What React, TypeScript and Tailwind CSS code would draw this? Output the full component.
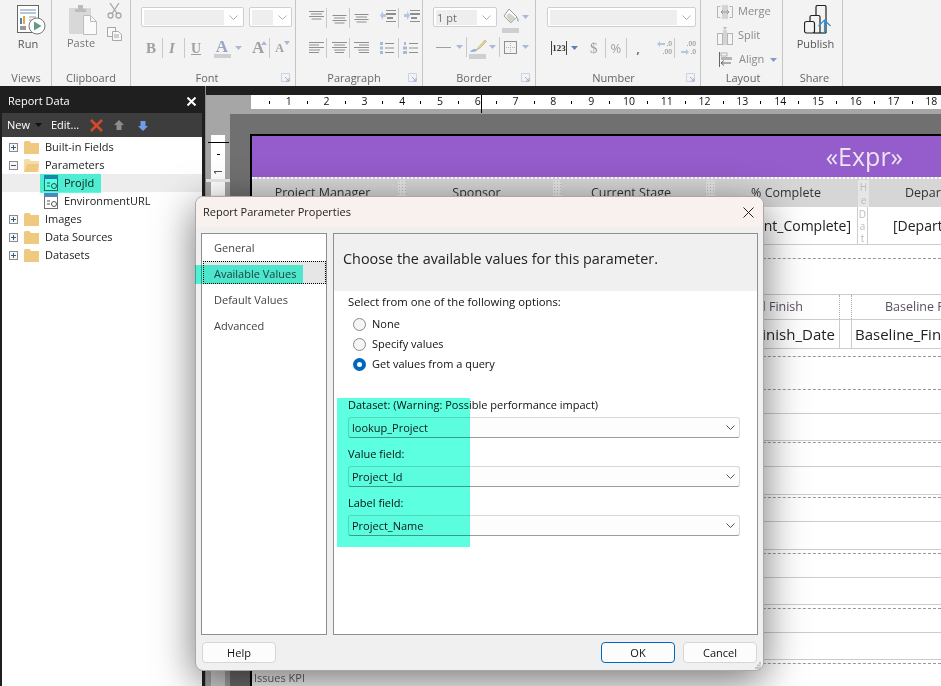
import type { ReactNode } from 'react'

const rulerNumbers = [1, 2, 3, 4, 5, 6, 7, 8, 9, 10, 11, 12, 13, 14, 15, 16, 17, 18]

// horizontal rules under the two tables, top to bottom
const reportLines = [
  'h-[8px] border-b border-dashed border-[#999]',
  'h-[33px] border-b border-dashed border-[#999]',
  'h-[24px] border-b border-[#ccc]',
  'h-[27px] border-b border-[#ccc]',
  'h-[2px] border-b border-dashed border-[#999]',
  'h-[24px] border-b border-[#ccc]',
  'h-[28px] border-b border-[#ccc]',
  'h-[3px] border-b border-dashed border-[#999]',
  'h-[24px] border-b border-[#ccc]',
  'h-[28px] border-b border-[#ccc]',
  'h-[4px] border-b border-dashed border-[#999]',
  'h-[24px] border-b border-[#ccc]',
  'h-[27px] border-b border-[#ccc]',
  'h-[4px] border-b border-dashed border-[#999]',
  'h-[24px] border-b border-[#ccc]',
  'h-[27px] border-b border-[#ccc]',
  'h-[4px] border-b border-dashed border-[#999]',
]

function Caret({ color = '#a9b9d6' }: { color?: string }) {
  return (
    <svg width="7" height="4" viewBox="0 0 7 4" className="shrink-0">
      <path d="M0 0h7L3.500 4z" fill={color} />
    </svg>
  )
}

function Chevron({ color = '#777' }: { color?: string }) {
  return (
    <svg width="9" height="5" viewBox="0 0 9 5" className="shrink-0">
      <path d="M.5.500l4 4 4-4" fill="none" stroke={color} strokeWidth="1" />
    </svg>
  )
}

function Sep() {
  return <div className="h-[20px] w-px shrink-0 bg-[#c9c9c9]" />
}

function RunIcon() {
  return (
    <svg width="30" height="30" viewBox="0 0 30 30">
      <rect x=".5" y=".5" width="21" height="27" fill="#fff" stroke="#666" />
      <path d="M3 5h16M3 8h16" stroke="#6d8fb8" />
      <path d="M12 12h7M12 15h7" stroke="#999" />
      <rect x="3" y="13" width="2" height="6" fill="#4d7fb8" />
      <rect x="6" y="11" width="2" height="8" fill="#e0a93c" />
      <rect x="3" y="21" width="6" height="4" fill="#999" />
      <circle cx="20" cy="21" r="8" fill="#fff" stroke="#777" />
      <path d="M17 16.500l7.500 4.500-7.500 4.500z" fill="#5f9c8a" />
    </svg>
  )
}

function PasteIcon() {
  return (
    <svg width="28" height="30" viewBox="0 0 28 30">
      <rect x="0" y="3" width="22" height="26" rx="1" fill="#d8d8d8" />
      <path d="M6 4h3V0h5v4h3v3H6z" fill="#bcbcbc" />
      <path d="M14.500 10.500h7l6 6v13h-13z" fill="#fafafa" stroke="#bcbcbc" />
      <path d="M21.500 10.500v6h6" fill="none" stroke="#bcbcbc" />
    </svg>
  )
}

function ScissorsIcon() {
  return (
    <svg width="15" height="16" viewBox="0 0 15 16" fill="none" stroke="#a8a8a8" strokeWidth="1.300">
      <path d="M3 0l7 10.500M12 0L5 10.500" />
      <circle cx="3.500" cy="12.500" r="2.500" />
      <circle cx="11.500" cy="12.500" r="2.500" />
    </svg>
  )
}

function CopyIcon() {
  return (
    <svg width="15" height="14" viewBox="0 0 15 14" fill="#f7f7f7" stroke="#a8a8a8">
      <rect x=".5" y=".5" width="8" height="9" />
      <path d="M5.500 4.500h6l3 3v6h-9z" />
      <path d="M7 8h5M7 10h5" />
    </svg>
  )
}

function TextLines({ widths, top }: { widths: number[]; top: number }) {
  return (
    <svg width="15" height="26" viewBox="0 0 15 26" className="shrink-0">
      {widths.map((w, i) => (
        <rect key={i} x={(15 - w) / 2} y={top + i * 2.500} width={w} height="1" fill="#8f8f8f" />
      ))}
    </svg>
  )
}

function IndentIcon({ flip }: { flip?: boolean }) {
  return (
    <svg width="16" height="14" viewBox="0 0 16 14" className="shrink-0">
      <g fill="#8f8f8f">
        <path d="M6 1h10v1H6zM6 4h10v2H6zM7 8h6v2H7zM6 12h10v1H6z" />
      </g>
      <path d={flip ? 'M0 5h3V2l3 4.500L3 11V8H0z' : 'M6 5H3V2L0 6.500 3 11V8h3z'} fill="#b4c6e4" />
    </svg>
  )
}

function BucketIcon() {
  return (
    <svg width="18" height="27" viewBox="0 0 18 27" className="shrink-0">
      <path d="M7 2l8 8-6 6-7-7z" fill="#fff" stroke="#9a9a9a" />
      <path d="M4 9l3-3 7 5-5 5z" fill="#cdd6c8" />
      <path d="M15 10c2 2 2.500 4 1 5-1-1-1.500-3-1-5z" fill="#9db6dd" />
      <rect x="0" y="21" width="17" height="5" fill="#cfcfcf" />
    </svg>
  )
}

function PenIcon() {
  return (
    <svg width="18" height="20" viewBox="0 0 18 20" className="shrink-0">
      <path d="M16 1l1.500 1.500-7 7L7 11z" fill="#e6d48e" stroke="#b5a56a" strokeWidth=".6" />
      <path d="M1 13c2-3 5-4 7-2-1 2-4 2-7 2z" fill="#8fb0e2" />
      <rect x="0" y="15" width="17" height="5" fill="#cfcfcf" />
    </svg>
  )
}

function BorderGridIcon() {
  return (
    <svg width="13" height="13" viewBox="0 0 13 13" className="shrink-0">
      <rect x=".5" y=".5" width="12" height="12" fill="none" stroke="#8f8f8f" />
      <path d="M6.500 2v9M2 6.500h9" stroke="#b5b5b5" strokeDasharray="1 1" />
    </svg>
  )
}

function MergeIcon() {
  return (
    <svg width="16" height="14" viewBox="0 0 16 14">
      <rect x="5" y="0" width="6" height="14" fill="#d4d4d4" />
      <path d="M.5 1.500v11h3M15.500 1.500v11h-3M.5 1.500h3M15.500 1.500h-3" fill="none" stroke="#b5b5b5" />
      <path d="M4 7h8" stroke="#999" />
      <path d="M6 5l-2 2 2 2M10 5l2 2-2 2" fill="none" stroke="#999" />
    </svg>
  )
}

function SplitIcon() {
  return (
    <svg width="16" height="18" viewBox="0 0 16 18">
      <path d="M6 0h4l-2 3z" fill="#bcbcbc" />
      <rect x=".5" y="6.500" width="5" height="11" fill="#f5f5f5" stroke="#b5b5b5" />
      <rect x="10.500" y="6.500" width="5" height="11" fill="#f5f5f5" stroke="#b5b5b5" />
      <rect x="6" y="3" width="4" height="15" fill="#d4d4d4" />
    </svg>
  )
}

function AlignIcon() {
  return (
    <svg width="13" height="15" viewBox="0 0 13 15">
      <path d="M.5 0v15" stroke="#666" />
      <rect x="2" y="1" width="6" height="3" fill="#f5f5f5" stroke="#999" strokeWidth=".7" />
      <rect x="2" y="5" width="11" height="3" fill="#b5b5b5" />
      <path d="M2 11h10M2 11l3-2.500M2 11l3 2.500" fill="none" stroke="#666" />
    </svg>
  )
}

function PublishIcon() {
  return (
    <svg width="28" height="29" viewBox="0 0 28 29" fill="none">
      <path d="M12 10V2a1.500 1.500 0 0 1 1.500-1.500h7A1.500 1.500 0 0 1 22 2v26" stroke="#222" strokeWidth="1.200" />
      <path d="M6 16v-4a1.500 1.500 0 0 1 1.500-1.500h7A1.500 1.500 0 0 1 16 12v16" stroke="#222" strokeWidth="1.200" />
      <rect x=".5" y="16.500" width="10" height="11.500" rx="2" stroke="#222" strokeWidth="1.200" />
      <path d="M10 28h12" stroke="#222" strokeWidth="1.200" />
      <path d="M20.500 29V15M14.500 21l6-6 6 6" stroke="#2a94dc" strokeWidth="1.200" />
    </svg>
  )
}

function DecimalIcon({ flip }: { flip?: boolean }) {
  return (
    <div className="flex h-[15px] w-[16px] shrink-0 flex-col items-end justify-center font-['Liberation_Sans',sans-serif] text-[7px] font-bold leading-[8px] text-[#a8a8a8]">
      <div className="flex items-center">
        {!flip && (
          <svg width="8" height="6" viewBox="0 0 8 6" className="mr-[1px]"><path d="M0 3l3-3v2h5v2H3v2z" fill="#b4c6e4" /></svg>
        )}
        <span>{flip ? '.00' : '.0'}</span>
      </div>
      <div className="flex items-center">
        {flip && (
          <svg width="8" height="6" viewBox="0 0 8 6" className="mr-[1px]"><path d="M8 3L5 0v2H0v2h5v2z" fill="#b4c6e4" /></svg>
        )}
        <span>{flip ? '.0' : '.00'}</span>
      </div>
    </div>
  )
}

function Group({ label, width, labelClass, launcher, children }: { label: string; width: string; labelClass?: string; launcher?: boolean; children: ReactNode }) {
  return (
    <div className={`${width} relative flex h-full shrink-0 flex-col border-r border-[#c6c6c6]`}>
      <div className="h-[70px] shrink-0">{children}</div>
      <div className={`text-center text-[11px] leading-[16px] text-[#676767] ${labelClass ?? ''}`}>{label}</div>
      {launcher && (
        <svg width="9" height="9" viewBox="0 0 9 9" className="absolute bottom-[4px] right-[5px]">
          <path d="M.5 8.500v-8h8v8z" fill="none" stroke="#c9d3e6" />
          <path d="M4 4l4 4M8 5v3H5" fill="none" stroke="#9db0d0" />
        </svg>
      )}
    </div>
  )
}

function RibbonCombo({ width, fill, text }: { width: string; fill: string; text?: string }) {
  return (
    <div className={`${width} flex h-[20px] shrink-0 items-center rounded-[2px] border border-[#cfcfcf] bg-white pl-[2px]`}>
      <div className={`${fill} h-[15px] bg-[#eeeeee] pl-[1px] text-[11px] leading-[15px] text-[#6f6f6f]`}>{text}</div>
      <div className="flex flex-1 justify-center">
        <Chevron color="#b0b0b0" />
      </div>
    </div>
  )
}

function Ribbon() {
  return (
    <div className="flex h-[86px] shrink-0 bg-[#f3f3f3]">
      <Group label="Views" width="w-[52px]" labelClass="pl-[1px]">
        <div className="flex flex-col items-center pl-[5px] pt-[5px]">
          <div className="ml-[7px]">
            <RunIcon />
          </div>
          <span className="mt-[1px] text-[11px] leading-[15px] text-[#555]">Run</span>
        </div>
      </Group>

      <Group label="Clipboard" width="w-[79px]">
        <div className="flex pl-[17px] pt-[5px]">
          <div className="flex w-[28px] flex-col items-start">
            <PasteIcon />
            <span className="-ml-[2px] text-[11px] leading-[15px] text-[#777]">Paste</span>
          </div>
          <div className="-mt-[2px] ml-[10px] flex flex-col gap-[8px]">
            <ScissorsIcon />
            <CopyIcon />
          </div>
        </div>
      </Group>

      <Group label="Font" width="w-[165px]" labelClass="pr-[12px]" launcher>
        <div className="flex gap-[5px] pl-[10px] pt-[7px]">
          <RibbonCombo width="w-[103px]" fill="w-[80px]" />
          <RibbonCombo width="w-[43px]" fill="w-[21px]" />
        </div>
        <div className="mt-[11px] flex h-[20px] items-center pl-[15px] font-['Liberation_Serif',serif] text-[#a0a0a0]">
          <span className="w-[11px] text-[15px] font-bold">B</span>
          <div className="ml-[5px]"><Sep /></div>
          <span className="ml-[6px] w-[11px] text-[15px] font-bold italic">I</span>
          <div className="ml-[4px]"><Sep /></div>
          <span className="ml-[6px] w-[11px] text-[14px] font-bold underline">U</span>
          <div className="relative ml-[11px] flex w-[18px] flex-col items-center">
            <span className="text-[17px] font-bold leading-[15px] text-[#9aa7c2]">A</span>
            <div className="h-[4px] w-[17px] bg-[#cfcfcf]" />
          </div>
          <div className="ml-[4px]"><Caret /></div>
          <span className="ml-[10px] text-[17px] font-bold">A</span>
          <svg width="6" height="4" viewBox="0 0 6 4" className="-ml-[3px] mb-[10px]"><path d="M0 4h6L3 0z" fill="#a9b9d6" /></svg>
          <div className="ml-[2px]"><Sep /></div>
          <span className="ml-[5px] text-[12px] font-bold">A</span>
          <svg width="6" height="4" viewBox="0 0 6 4" className="mb-[10px]"><path d="M0 0h6L3 4z" fill="#a9b9d6" /></svg>
        </div>
      </Group>

      <Group label="Paragraph" width="w-[127px]" labelClass="pr-[10px]" launcher>
        <div className="flex h-[26px] items-start pl-[13px]">
          <TextLines widths={[15, 11, 15, 10]} top={11} />
          <div className="ml-[2px] mt-[8px]"><Sep /></div>
          <div className="ml-[5px]"><TextLines widths={[14, 11, 14, 10]} top={15} /></div>
          <div className="ml-[2px] mt-[8px]"><Sep /></div>
          <div className="ml-[4px] mt-[11px] flex h-[15px] items-center">
            <TextLines widths={[14, 11, 14, 10]} top={8} />
          </div>
          <div className="ml-[11px] mt-[9px]"><IndentIcon /></div>
          <div className="ml-[2px] mt-[8px]"><Sep /></div>
          <div className="ml-[5px] mt-[9px]"><IndentIcon flip /></div>
        </div>
        <div className="mt-[12px] flex h-[20px] items-center pl-[13px]">
          <svg width="15" height="12" viewBox="0 0 15 12"><path d="M0 .5h15M0 3h10M0 5.500h15M0 8h11M0 10.500h10" stroke="#8f8f8f" /></svg>
          <div className="ml-[2px]"><Sep /></div>
          <svg width="15" height="12" viewBox="0 0 15 12" className="ml-[5px]"><path d="M0 .5h15M2 3h11M0 5.500h15M2 8h11M3 10.500h9" stroke="#8f8f8f" /></svg>
          <div className="ml-[2px]"><Sep /></div>
          <svg width="15" height="12" viewBox="0 0 15 12" className="ml-[4px]"><path d="M0 .5h15M5 3h10M0 5.500h15M4 8h11M5 10.500h10" stroke="#8f8f8f" /></svg>
          <svg width="14" height="12" viewBox="0 0 14 12" className="ml-[11px]"><path d="M5 1.500h9M5 6h9M5 10.500h9" stroke="#8f8f8f" /><path d="M0 0h3v3H0zM0 4.500h3v3H0zM0 9h3v3H0z" fill="#a9b9d6" /></svg>
          <div className="ml-[4px]"><Sep /></div>
          <svg width="15" height="12" viewBox="0 0 15 12" className="ml-[4px]"><path d="M6 1.500h9M6 6h9M6 10.500h9" stroke="#8f8f8f" /><path d="M1 0h2v3H1zM0 4.500h4v3H0zM0 9h4v3H0z" fill="#a9b9d6" /></svg>
        </div>
      </Group>

      <Group label="Border" width="w-[113px]" labelClass="pr-[10px]" launcher>
        <div className="flex items-start pl-[10px] pt-[7px]">
          <RibbonCombo width="w-[64px]" fill="w-[41px]" text="1 pt" />
          <div className="ml-[5px]"><BucketIcon /></div>
          <div className="ml-[2px] mt-[8px]"><Caret /></div>
        </div>
        <div className="mt-[3px] flex h-[20px] items-center pl-[13px]">
          <div className="h-px w-[15px] bg-[#9f9f9f]" />
          <div className="ml-[5px]"><Caret /></div>
          <div className="ml-[3px]"><Sep /></div>
          <div className="ml-[2px] mt-[4px]"><PenIcon /></div>
          <div className="ml-[2px]"><Caret /></div>
          <div className="ml-[3px]"><Sep /></div>
          <div className="ml-[4px]"><BorderGridIcon /></div>
          <div className="ml-[5px]"><Caret /></div>
        </div>
      </Group>

      <Group label="Number" width="w-[165px]" labelClass="pr-[9px]" launcher>
        <div className="pl-[11px] pt-[7px]">
          <RibbonCombo width="w-[149px]" fill="w-[127px]" />
        </div>
        <div className="mt-[11px] flex h-[20px] items-center pl-[15px] text-[#a0a0a0]">
          <span className="flex h-[14px] w-[16px] shrink-0 items-center justify-center border-x border-[#444] font-['Liberation_Serif',serif] text-[9px] font-bold leading-[12px] text-[#333]">123</span>
          <div className="ml-[4px]"><Caret color="#5b7fb8" /></div>
          <span className="ml-[12px] font-['Liberation_Serif',serif] text-[15px] leading-[15px]">$</span>
          <div className="ml-[7px]"><Sep /></div>
          <span className="ml-[5px] text-[13px] leading-[15px]">%</span>
          <div className="ml-[5px]"><Sep /></div>
          <span className="ml-[9px] w-[6px] text-[13px] font-bold leading-[15px] text-[#777]">,</span>
          <div className="ml-[14px]"><DecimalIcon /></div>
          <div className="ml-[2px]"><Sep /></div>
          <div className="ml-[5px]"><DecimalIcon flip /></div>
        </div>
      </Group>

      <Group label="Layout" width="w-[82px]" labelClass="pl-[3px]">
        <div className="flex flex-col pl-[16px] pt-[4px] text-[11px] text-[#8a8a8a]">
          <div className="flex h-[15px] items-center gap-[5px]"><MergeIcon />Merge</div>
          <div className="mt-[9px] flex h-[15px] items-center gap-[5px]"><SplitIcon />Split</div>
          <div className="mt-[9px] flex h-[15px] items-center"><div className="ml-[2px]"><AlignIcon /></div><span className="ml-[7px]">Align</span><div className="ml-[6px]"><Caret color="#7f9cc9" /></div></div>
        </div>
      </Group>

      <Group label="Share" width="w-[60px]" labelClass="pl-[4px]">
        <div className="flex flex-col items-center pl-[6px] pt-[5px]">
          <div className="ml-[5px]"><PublishIcon /></div>
          <span className="mt-[2px] text-[11px] leading-[15px] text-[#555]">Publish</span>
        </div>
      </Group>
    </div>
  )
}

function Expander({ open }: { open?: boolean }) {
  return (
    <svg width="9" height="9" viewBox="0 0 9 9" className="shrink-0">
      <rect x=".5" y=".5" width="8" height="8" fill="#f7f7f7" stroke="#8a8a8a" />
      <path d={open ? 'M2 4.500h5' : 'M2 4.500h5M4.500 2v5'} stroke="#3a5a8c" />
    </svg>
  )
}

function Folder({ open }: { open?: boolean }) {
  return (
    <svg width="15" height="13" viewBox="0 0 15 13" className="shrink-0">
      <path d="M0 1.500A1.500 1.500 0 0 1 1.500 0h4L7 2h8v11H0z" fill={open ? '#f6dca8' : '#efc980'} />
      {open && <path d="M0 13l3-8h12l-2 8z" fill="#efc980" />}
    </svg>
  )
}

function ParamIcon() {
  return (
    <svg width="14" height="16" viewBox="0 0 14 16" className="shrink-0">
      <rect x=".5" y=".5" width="13" height="15" fill="#fff" stroke="#6d6d6d" />
      <rect x="0" y="0" width="14" height="4" fill="#4f86bd" />
      <path d="M3 8h3M3 11h3" stroke="#555" />
      <circle cx="10" cy="11" r="2.500" fill="none" stroke="#555" />
    </svg>
  )
}

function TreeRow({ label, open, leaf, active }: { label: string; open?: boolean; leaf?: boolean; active?: boolean }) {
  return (
    <div className={`flex h-[18px] items-center text-[11px] text-[#222] ${active ? 'bg-[#ededed]' : ''}`}>
      {leaf ? (
        <>
          <div className="ml-[42px]"><ParamIcon /></div>
          <span className="ml-[6px]">{label}</span>
        </>
      ) : (
        <>
          <div className="ml-[7px]"><Expander open={open} /></div>
          <div className="ml-[6px]"><Folder open={open} /></div>
          <span className="ml-[6px]">{label}</span>
        </>
      )}
    </div>
  )
}

function ReportDataPanel() {
  return (
    <div className="flex w-[202px] shrink-0 flex-col pl-[2px]">
      <div className="flex h-[27px] shrink-0 items-center justify-between pl-[6px] pr-[6px] pt-[3px] text-[11px] text-white">
        <span>Report Data</span>
        <svg width="9" height="9" viewBox="0 0 9 9"><path d="M.5.500l8 8M8.500.500l-8 8" stroke="#fff" strokeWidth="2" /></svg>
      </div>
      <div className="flex h-[24px] shrink-0 items-center bg-[#3d3d3d] pl-[5px] text-[11px] text-white">
        <span>New</span>
        <div className="ml-[5px]"><Caret color="#111" /></div>
        <span className="ml-[9px]">Edit...</span>
        <svg width="13" height="13" viewBox="0 0 13 13" className="ml-[11px]"><path d="M1 1l11 11M12 1L1 12" stroke="#d24a2a" strokeWidth="2.600" /></svg>
        <svg width="10" height="11" viewBox="0 0 10 11" className="ml-[11px]"><path d="M5 0l5 5H7.500v5h-5V5H0z" fill="#8d8d8d" /></svg>
        <svg width="10" height="11" viewBox="0 0 10 11" className="ml-[14px]"><path d="M5 11l5-5H7.500V1h-5v5H0z" fill="#6f9be8" /></svg>
      </div>
      <div className="flex-1 bg-white pt-px">
        <TreeRow label="Built-in Fields" />
        <TreeRow label="Parameters" open />
        <TreeRow label="ProjId" leaf active />
        <TreeRow label="EnvironmentURL" leaf />
        <TreeRow label="Images" />
        <TreeRow label="Data Sources" />
        <TreeRow label="Datasets" />
      </div>
    </div>
  )
}

function Hatch({ width }: { width: string }) {
  return <div className={`${width} shrink-0 self-stretch bg-[#e6e6e6] bg-[radial-gradient(#bdbdbd_0.6px,transparent_0.6px)] bg-[length:3px_3px]`} />
}

function Report() {
  return (
    <div className="min-w-0 flex-1 overflow-hidden border-l-2 border-t-2 border-black bg-white">
      <div className="flex h-[41px] items-center justify-end bg-[#955ccb] pr-[38px] text-[25px] text-[#ebe4f2]">«Expr»</div>
      <div className="h-[3px] border-t-2 border-dotted border-white bg-[#d6d6d6]" />
      {/* header table */}
      <div className="flex h-[27px] items-center whitespace-nowrap bg-[#d6d6d6] text-[12.500px] text-[#333]">
        <div className="w-[146px] shrink-0 pr-[5px] text-center">Project Manager</div>
        <Hatch width="w-[8px]" />
        <div className="w-[147px] shrink-0 pr-[6px] text-center">Sponsor</div>
        <Hatch width="w-[8px]" />
        <div className="w-[145px] shrink-0 pr-[5px] text-center">Current Stage</div>
        <Hatch width="w-[9px]" />
        <div className="w-[143px] shrink-0 pr-[1px] text-center">% Complete</div>
        <div className="flex h-full w-[11px] shrink-0 flex-col items-center justify-center bg-[#e6e6e6] text-[10px] leading-[13px] text-[#bbb]">
          <span>H</span>
          <span>e</span>
        </div>
        <div className="shrink-0 pl-[36px]">Department</div>
      </div>
      <div className="flex h-[38px] items-center whitespace-nowrap border-b border-[#ccc] text-[14px] text-[#222]">
        <div className="w-[605px] shrink-0 pr-[6px] text-right">[Percent_Complete]</div>
        <div className="flex h-full w-[11px] shrink-0 flex-col items-center justify-center border-x border-[#ccc] text-[10px] leading-[12px] text-[#bbb]">
          <span>D</span>
          <span>a</span>
          <span>t</span>
        </div>
        <div className="shrink-0 pl-[25px]">[Department]</div>
      </div>
      <div className="h-[14px] border-b border-dashed border-[#999]" />
      <div className="h-[35px]" />
      {/* schedule table */}
      <div className="flex h-[26px] items-center whitespace-nowrap border-y border-[#ccc] text-[12.500px] text-[#5a5060]">
        <div className="w-[587px] shrink-0 pr-[36px] text-right">Actual Finish</div>
        <div className="h-full w-[13px] shrink-0 border-x border-dotted border-[#aaa]" />
        <div className="shrink-0 pl-[33px]">Baseline Finish</div>
      </div>
      <div className="flex h-[29px] items-center whitespace-nowrap border-b border-[#ccc] text-[15px] text-[#222]">
        <div className="w-[587px] shrink-0 pr-[4px] text-right">Actual_Finish_Date</div>
        <div className="h-full w-[13px] shrink-0 border-x border-[#ccc]" />
        <div className="shrink-0 pl-[3px]">Baseline_Finish_Date</div>
      </div>
      {reportLines.map((line, i) => (
        <div key={i} className={line} />
      ))}
      <div className="pl-[2px] pt-[6px] text-[11px] leading-[16px] text-[#666]">Issues KPI</div>
    </div>
  )
}

function Canvas() {
  return (
    <div className="relative flex min-w-0 flex-1 flex-col border-l border-[#8a8a8a] bg-[#a6a6a6]">
      <div className="h-[9px] shrink-0 bg-[#1f1f1f]" />
      <div className="ml-[45px] flex h-[14px] shrink-0 items-center overflow-hidden bg-white text-[10.500px] text-[#111]">
        {rulerNumbers.map((n) => (
          <div key={n} className="flex h-full w-[37.8px] shrink-0 items-center">
            <span className="ml-[18px] h-[3px] w-px bg-black" />
            <span className="ml-auto translate-x-1/2">{n}</span>
          </div>
        ))}
      </div>
      <div className="h-[5px] shrink-0" />
      <div className="flex min-h-0 flex-1">
        <div className="w-[24px] shrink-0 pl-[5px] pt-[21px]">
          <div className="flex h-[60px] w-[14px] flex-col items-center bg-white pt-[19px] text-[10px] leading-[10px] text-[#111]">
            <span className="h-px w-[3px] bg-black" />
            <span className="mt-[12px] -rotate-90">1</span>
          </div>
          <div className="h-full w-[14px] bg-gradient-to-b from-[#f0f0f0] to-[#d0d0d0]" />
        </div>
        <div className="flex min-w-0 flex-1 bg-[#707070] pl-[20px] pt-[20px]">
          <Report />
        </div>
      </div>
      {/* page marker lines on the rulers */}
      <div className="absolute left-[2px] top-[56px] h-px w-[21px] bg-black" />
      <div className="absolute left-0 top-[93px] h-[3px] w-[24px] bg-[#e8e8e8]" />
      <div className="absolute left-[275px] top-[9px] h-[18px] w-px bg-black" />
    </div>
  )
}

function Radio({ label, checked }: { label: string; checked?: boolean }) {
  return (
    <div className="flex h-[20px] items-center gap-[6px]">
      {checked ? (
        <div className="flex size-[13px] items-center justify-center rounded-full bg-[#0067c0]">
          <div className="size-[5px] rounded-full bg-white" />
        </div>
      ) : (
        <div className="size-[13px] rounded-full border border-[#8a8a8a] bg-[#f5f5f5]" />
      )}
      <span>{label}</span>
    </div>
  )
}

function Combo({ value, className }: { value: string; className: string }) {
  return (
    <div className={`flex h-[21px] w-[392px] items-center justify-between rounded-[3px] border border-[#d9d9d9] border-b-[#9c9c9c] bg-[#fdfdfd] pl-[3px] pr-[4px] text-[#1a1a1a] ${className}`}>
      <span>{value}</span>
      <Chevron color="#555" />
    </div>
  )
}

function DialogButton({ label, primary }: { label: string; primary?: boolean }) {
  return (
    <div className={`flex h-[21px] w-[74px] items-center justify-center rounded-[4px] bg-[#fcfcfc] text-[#111] ${primary ? 'border-[1.500px] border-[#0067c0]' : 'border border-[#d6d6d6]'}`}>
      {label}
    </div>
  )
}

function ParameterDialog() {
  return (
    <div className="absolute left-[195px] top-[196px] flex h-[475px] w-[569px] flex-col overflow-hidden rounded-[8px] border border-[#a8a8a8] bg-[#f0f0f0] text-[11px] leading-[16px] shadow-[0_10px_40px_rgba(0,0,0,0.55)]">
      <div className="flex h-[30px] shrink-0 items-center justify-between bg-[#f9f1ee] pl-[7px] pr-[9px] text-[#222]">
        <span>Report Parameter Properties</span>
        <svg width="11" height="11" viewBox="0 0 11 11"><path d="M.5.500l10 10M10.500.500l-10 10" stroke="#222" /></svg>
      </div>
      <div className="flex h-[408px] shrink-0 gap-[6px] pl-[5px] pt-[6px]">
        <div className="flex h-[402px] w-[126px] shrink-0 flex-col gap-[3px] border border-[#8f8f8f] bg-white pl-px pt-px text-[#444]">
          <div className="flex h-[23px] items-center pl-[11px] pt-[3px]">General</div>
          <div className="flex h-[23px] items-center border border-dotted border-black bg-[#e6e6e6] pl-[10px] pt-[3px]">Available Values</div>
          <div className="flex h-[23px] items-center pl-[11px] pt-[3px]">Default Values</div>
          <div className="flex h-[23px] items-center pl-[11px] pt-[3px]">Advanced</div>
        </div>
        <div className="h-[402px] w-[425px] shrink-0 border border-[#8f8f8f] bg-white">
          <div className="flex h-[57px] items-center bg-[#f0f0f0] pb-[7px] pl-[9px] text-[14.400px] text-[#222]">
            Choose the available values for this parameter.
          </div>
          <div className="pl-[14px] text-[#111]">
            <div className="pt-[3px] text-[11.300px]">Select from one of the following options:</div>
            <div className="mt-[4px] pl-[5px]">
              <Radio label="None" />
              <Radio label="Specify values" />
              <Radio label="Get values from a query" checked />
            </div>
            <div className="mt-[23px]">Dataset: (Warning: Possible performance impact)</div>
            <Combo value="lookup_Project" className="mt-[4px]" />
            <div className="mt-[8px]">Value field:</div>
            <Combo value="Project_Id" className="mt-[4px]" />
            <div className="mt-[8px]">Label field:</div>
            <Combo value="Project_Name" className="mt-[4px]" />
          </div>
        </div>
      </div>
      <div className="flex items-center justify-between pl-[6px] pr-[6px] pt-[7px]">
        <DialogButton label="Help" />
        <div className="flex gap-[8px]">
          <DialogButton label="OK" primary />
          <DialogButton label="Cancel" />
        </div>
      </div>
      <svg width="8" height="8" viewBox="0 0 8 8" className="absolute bottom-[1px] right-[1px]">
        <path d="M5 1h2v2H5zM3 3.500h2v2H3zM5 3.500h2v2H5zM1 6h2v2H1zM3 6h2v2H3zM5 6h2v2H5z" fill="#c4c4c4" />
      </svg>
    </div>
  )
}

export default function App() {
  return (
    <div className="relative flex h-[686px] w-[941px] flex-col overflow-hidden bg-[#1f1f1f] font-['Open_Sans',sans-serif]">
      <Ribbon />
      <div className="flex min-h-0 flex-1">
        <ReportDataPanel />
        <div className="w-[3px] shrink-0 bg-[#1f1f1f]" />
        <Canvas />
      </div>
      <ParameterDialog />
      {/* teal markup someone painted over the screenshot */}
      <div className="absolute left-[40px] top-[174px] h-[19px] w-[61px] bg-[#55ffe2] mix-blend-multiply" />
      <div className="absolute left-[195px] top-[265px] h-[19px] w-[108px] bg-[#55ffe2] mix-blend-multiply" />
      <div className="absolute left-[337px] top-[398px] h-[149px] w-[133px] bg-[#5cffe0] mix-blend-multiply" />
    </div>
  )
}
